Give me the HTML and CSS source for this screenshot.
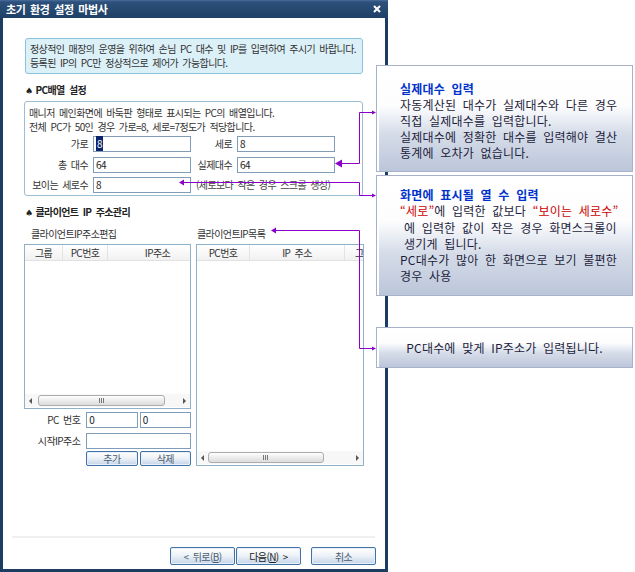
FILE: index.html
```html
<!DOCTYPE html>
<html lang="ko">
<head>
  <meta charset="UTF-8" />
  <title>초기 환경 설정 마법사</title>
  <link rel="stylesheet" href="styles.css">
</head>
<body>
  <div class="stage">
    <div class="window">
      <div class="titlebar">
        <span class="title">초기 환경 설정 마법사</span>
        <svg class="close" width="8" height="8" viewBox="0 0 8 8">
          <path d="M1 1 L7 7 M7 1 L1 7" stroke="#fff" stroke-width="2" />
        </svg>
      </div>

      <div class="content">
        <div class="notice">
          <p>정상적인 매장의 운영을 위하여 손님 PC 대수 및 IP를 입력하여 주시기 바랍니다.</p>
          <p>등록된 IP의 PC만 정상적으로 제어가 가능합니다.</p>
        </div>

        <h3 class="section">PC배열 설정</h3>
        <div class="group">
          <p>매니저 메인화면에 바둑판 형태로 표시되는 PC의 배열입니다.</p>
          <p>전체 PC가 50인 경우 가로=8, 세로=7정도가 적당합니다.</p>
          <div class="grid">
            <label>가로</label>
            <div class="field"><span class="sel">8</span></div>
            <label>세로</label>
            <div class="field">8</div>
            <label>총 대수</label>
            <div class="field">64</div>
            <label>실제대수</label>
            <div class="field">64</div>
            <label>보이는 세로수</label>
            <div class="field">8</div>
            <span class="hint">(세로보다 작은 경우 스크롤 생성)</span>
          </div>
        </div>

        <h3 class="section">클라이언트 IP 주소관리</h3>
        <div class="ip-area">
          <div class="ip-left">
            <div class="sub">클라이언트IP주소편집</div>
            <div class="list list-left">
              <div class="list-head">
                <span class="col col-group">그룹</span>
                <span class="col col-pc">PC번호</span>
                <span class="col col-ip">IP주소</span>
              </div>
              <div class="list-body"></div>
              <div class="hscroll">
                <span class="arrow arrow-left"></span>
                <div class="thumb"><span class="grip"></span></div>
                <span class="arrow arrow-right"></span>
              </div>
            </div>

            <div class="form-row">
              <label>PC 번호</label>
              <div class="field small">0</div>
              <div class="field small">0</div>
            </div>
            <div class="form-row row-ip">
              <label>시작IP주소</label>
              <div class="field wide"></div>
            </div>
            <div class="form-row row-btn">
              <span class="spacer"></span>
              <button class="btn small">추가</button>
              <button class="btn small">삭제</button>
            </div>
          </div>

          <div class="ip-right">
            <div class="sub">클라이언트IP목록</div>
            <div class="list list-right">
              <div class="list-head">
                <span class="col col-pc2">PC번호</span>
                <span class="col col-ip2">IP 주소</span>
                <span class="col col-group">그룹</span>
              </div>
              <div class="list-body"></div>
              <div class="hscroll">
                <span class="arrow arrow-left"></span>
                <div class="thumb"><span class="grip"></span></div>
                <span class="arrow arrow-right"></span>
              </div>
            </div>
          </div>
        </div>

        <div class="footer">
          <div class="footer-line"></div>
          <div class="footer-buttons">
            <button class="btn nav">&lt; 뒤로(<u>B</u>)</button>
            <button class="btn nav default">다음(<u>N</u>) &gt;</button>
            <button class="btn nav cancel">취소</button>
          </div>
        </div>
      </div>
    </div>

    <!-- 설명 풍선 -->
    <div class="callout c1">
      <div class="callout-title">실제대수 입력</div>
      <div>자동계산된 대수가 실제대수와 다른 경우</div>
      <div>직접 실제대수를 입력합니다.</div>
      <div>실제대수에 정확한 대수를 입력해야 결산</div>
      <div>통계에 오차가 없습니다.</div>
    </div>

    <div class="callout c2">
      <div class="callout-title">화면에 표시될 열 수 입력</div>
      <div><span class="red">“세로”</span>에 입력한 값보다 <span class="red">“보이는 세로수”</span></div>
      <div class="indent">에 입력한 값이 작은 경우 화면스크롤이</div>
      <div class="indent">생기게 됩니다.</div>
      <div>PC대수가 많아 한 화면으로 보기 불편한</div>
      <div>경우 사용</div>
    </div>

    <div class="callout c3">
      <div>PC대수에 맞게 IP주소가 입력됩니다.</div>
    </div>

    <svg class="links" width="635" height="572" viewBox="0 0 635 572">
      <g fill="none" stroke="#8a00c8" stroke-width="1">
        <polyline points="341,163.5 359.5,163.5 359.5,112.5 373,112.5" />
        <polyline points="183,182.5 359.5,182.5 359.5,195.5 373,195.5" />
        <polyline points="275,230.5 359.5,230.5 359.5,348.5 373,348.5" />
      </g>
      <g fill="#8a00c8">
        <polygon points="335,163.5 342,159.5 342,167.5" />
        <polygon points="179,182.5 184,179.5 184,185.5" />
        <polygon points="271,230.5 276,227.5 276,233.5" />
        <polygon points="376,112.5 372,110.5 372,114.5" />
        <polygon points="376,195.5 372,193.5 372,197.5" />
        <polygon points="376,348.5 372,346.5 372,350.5" />
      </g>
    </svg>
  </div>
</body>
</html>
```

FILE: styles.css
```css
* {
  box-sizing: border-box;
  margin: 0;
  padding: 0;
}

body {
  background-color: #fff;
  font-family: "Noto Sans CJK KR", "Noto Sans", sans-serif;
}

.stage {
  position: relative;
  width: 635px;
  height: 572px;
  overflow: hidden;
}

/* dialog window */

.window {
  width: 388px;
  height: 572px;
  background-color: #1c3d62;
  padding: 0 3px 3px;
  display: flex;
  flex-direction: column;
}

.titlebar {
  height: 18px;
  margin: 0 -3px;
  padding: 0 7px 0 6px;
  display: flex;
  align-items: center;
  justify-content: space-between;
  background: linear-gradient(#4a6e9c, #2c507b 2px, #25486f 60%, #1f4068);
  color: #fff;
  font-size: 11px;
  font-weight: bold;
  letter-spacing: -0.4px;
  word-spacing: 2px;
}

.content {
  flex: 1;
  display: flex;
  flex-direction: column;
  background-color: #fff;
  color: #333;
  font-size: 10px;
  line-height: 14px;
  letter-spacing: -0.6px;
  word-spacing: 2px;
}

.notice {
  width: 338px;
  margin: 20px 0 0 22px;
  padding: 3px 4px;
  border: 1px solid #8cc3dc;
  border-radius: 3px;
  background-color: #dcf0f8;
}

.section {
  margin: 9px 0 3px 22px;
  font-size: 10px;
  font-weight: bold;
  color: #222;
}

.section::before {
  content: "\2660";
  font-family: "DejaVu Sans", sans-serif;
  font-size: 9px;
  margin-right: 3px;
}

.group {
  width: 339px;
  margin-left: 21px;
  padding: 4px 4px 2px;
  border: 1px solid #9dbdd3;
  border-radius: 3px;
}

.grid {
  display: grid;
  grid-template-columns: 64px 98px 46px 98px;
  grid-auto-rows: 16px;
  row-gap: 4.5px;
  margin-top: 2px;
  align-items: center;
}

.grid label,
.form-row label {
  text-align: right;
  padding-right: 5px;
  white-space: nowrap;
}

.field {
  height: 16px;
  border: 1px solid #7f9db9;
  background-color: #fff;
  padding-left: 2px;
  line-height: 14px;
  color: #222;
}

.sel {
  background-color: #0a246a;
  color: #fff;
  padding: 0 1px;
}

.hint {
  grid-column: span 2;
  padding-left: 5px;
  color: #444;
  white-space: nowrap;
}

/* client ip */

.ip-area {
  display: flex;
  gap: 5px;
  margin: 4px 0 0 21px;
}

.ip-left { width: 167px; }
.ip-right { width: 168px; }

.sub {
  margin-bottom: 3px;
  padding-left: 1px;
}

.ip-left .sub { padding-left: 7px; }

.list {
  display: flex;
  flex-direction: column;
  border: 1px solid #8fb1c9;
  background-color: #fff;
  overflow: hidden;
}

.list-left { height: 165px; }
.list-right { height: 222px; }

.list-head {
  display: flex;
  height: 16px;
  flex-shrink: 0;
  background: linear-gradient(#fff, #f1f1f1);
  border-bottom: 1px solid #e2e2e2;
  white-space: nowrap;
}

.col {
  flex-shrink: 0;
  text-align: center;
  line-height: 15px;
  border-right: 1px solid #e3e3e3;
}

.col-group { width: 38px; }
.col-pc { width: 45px; }
.col-ip { width: 100px; }
.col-pc2 { width: 53px; }
.col-ip2 { width: 95px; }

.list-body { flex: 1; }

.hscroll {
  height: 13px;
  margin-bottom: 1px;
  padding: 0 4px;
  display: flex;
  align-items: center;
  background-color: #f7f7f7;
}

.arrow {
  width: 0;
  height: 0;
  border-top: 3px solid transparent;
  border-bottom: 3px solid transparent;
}

.arrow-left { border-right: 3px solid #555; }
.arrow-right { border-left: 3px solid #555; margin-left: auto; }

.thumb {
  height: 11px;
  border: 1px solid #adadad;
  border-radius: 3px;
  background: linear-gradient(#fefefe, #ececec 50%, #dcdcdc);
  display: flex;
  align-items: center;
  justify-content: center;
}

.list-left .thumb { width: 127px; margin-left: 6px; }
.list-right .thumb { width: 116px; margin-left: 4px; }

.grip {
  width: 6px;
  height: 5px;
  background: repeating-linear-gradient(90deg, #777 0 1px, transparent 1px 2px);
}

.form-row {
  display: flex;
  gap: 2px;
  margin-top: 3px;
}

.form-row label,
.form-row .spacer {
  width: 61px;
  padding-right: 4px;
  line-height: 16px;
}

.field.small { width: 52px; }
.field.wide { width: 106px; }

.row-ip { margin-top: 5px; }
.row-btn { margin-top: 2px; }

.btn {
  font-family: inherit;
  font-size: 10px;
  letter-spacing: -0.6px;
  word-spacing: 2px;
  color: #4b5b70;
  border: 1px solid #3f72a8;
  border-radius: 2px;
  background: linear-gradient(#ffffff, #eef3f8 45%, #c4d4e8);
  box-shadow: inset 0 0 0 1px #e9f0f8;
  cursor: pointer;
}

.btn.small {
  width: 52px;
  height: 15px;
  line-height: 12px;
}

/* footer */

.footer {
  margin-top: auto;
}

.footer-line {
  height: 2px;
  margin: 0 10px 0 9px;
  background-color: #efefef;
}

.footer-buttons {
  display: flex;
  justify-content: flex-end;
  gap: 1px;
  padding: 9px 9px 4px;
}

.btn.nav {
  width: 65px;
  height: 18px;
}

.btn.default { color: #222; }
.btn.cancel { margin-left: 9px; }

/* callouts */

.callout {
  position: absolute;
  left: 376px;
  width: 257px;
  padding-left: 23px;
  border: 1px solid #a7b2ca;
  background: linear-gradient(#ffffff 0%, #fdfdfe 38%, #d6dde9 64%, #bcc6da 100%);
  box-shadow: inset 2px 1px 0 #fff;
  color: #1d1d3b;
  font-size: 12px;
  line-height: 16px;
  letter-spacing: 0.2px;
  word-spacing: 3px;
  white-space: nowrap;
}

.callout-title {
  color: #0033cc;
  font-weight: bold;
}

.c1 {
  top: 65px;
  height: 107px;
  padding-top: 15px;
}

.c2 {
  top: 175px;
  height: 121px;
  padding-top: 11px;
  line-height: 16.3px;
}

.c3 {
  top: 327px;
  height: 41px;
  padding-left: 0;
  display: flex;
  align-items: center;
  justify-content: center;
}

.red { color: #cc0000; }
.indent { padding-left: 4px; }

.links {
  position: absolute;
  left: 0;
  top: 0;
  pointer-events: none;
}
```
